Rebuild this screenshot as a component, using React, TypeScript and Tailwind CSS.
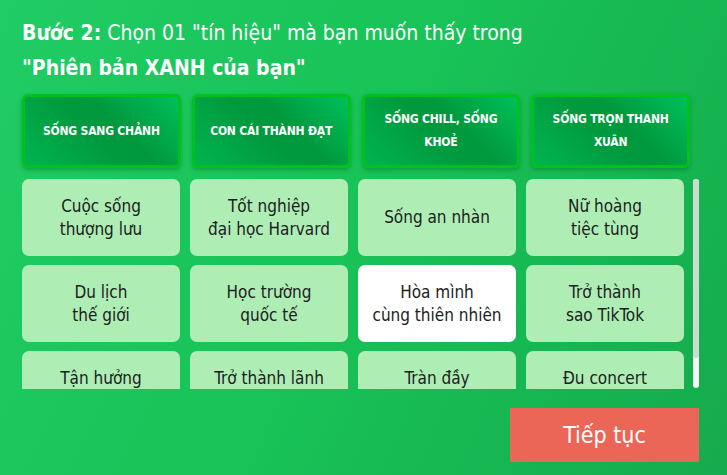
import React from 'react';

const categories = [
  ['SỐNG SANG CHẢNH'],
  ['CON CÁI THÀNH ĐẠT'],
  ['SỐNG CHILL, SỐNG', 'KHOẺ'],
  ['SỐNG TRỌN THANH', 'XUÂN'],
];

const signals = [
  ['Cuộc sống', 'thượng lưu'],
  ['Tốt nghiệp', 'đại học Harvard'],
  ['Sống an nhàn'],
  ['Nữ hoàng', 'tiệc tùng'],
  ['Du lịch', 'thế giới'],
  ['Học trường', 'quốc tế'],
  ['Hòa mình', 'cùng thiên nhiên'],
  ['Trở thành', 'sao TikTok'],
  ['Tận hưởng', 'nghỉ dưỡng'],
  ['Trở thành lãnh', 'đạo'],
  ['Tràn đầy', 'năng lượng'],
  ['Đu concert', 'thần tượng'],
];

const narrow = "font-['DejaVu_Sans_Condensed','Roboto',sans-serif]";

export default function App() {
  const selected = 6;

  return (
    <div
      className={`w-[727px] h-[475px] overflow-hidden bg-[linear-gradient(115deg,#20cc64_0%,#18c457_45%,#15ab4e_100%)] pl-[22px] pr-[28px] pt-[16px] ${narrow}`}
    >
      <h2 className="text-white text-[21px] leading-[35px] font-normal">
        <span className="font-bold">Bước 2:</span> Chọn 01 "tín hiệu" mà bạn muốn thấy trong
        <br />
        <span className="font-bold">"Phiên bản XANH của bạn"</span>
      </h2>

      <div className="grid grid-cols-4 gap-[11px] w-[668px] mt-[8px]">
        {categories.map((lines, i) => (
          <div
            key={i}
            className="h-[74px] rounded-[6px] border-[3px] border-[#00c21f] bg-[linear-gradient(45deg,#00b44f_0%,#009a3e_45%,#00983d_60%,#00c05a_100%)] shadow-[0_2px_4px_rgba(0,80,30,0.35)] flex flex-col items-center justify-center text-white text-[12px] leading-[23px] font-bold tracking-[-0.2px] whitespace-nowrap"
          >
            {lines.map((l) => (
              <span key={l}>{l}</span>
            ))}
          </div>
        ))}
      </div>

      <div className="mt-[11px] flex">
        <div className="h-[210px] w-[662px] overflow-hidden">
          <div className="grid grid-cols-4 gap-x-[10px] gap-y-[9px]">
            {signals.map((lines, i) => (
              <div
                key={i}
                className={`h-[77px] rounded-[7px] flex flex-col items-center justify-center text-[17px] leading-[23px] text-[#1c211d] text-center ${
                  i === selected ? 'bg-white' : 'bg-[#aeeeb5]'
                }`}
              >
                {lines.map((l) => (
                  <span key={l}>{l}</span>
                ))}
              </div>
            ))}
          </div>
        </div>
        {/* scrollbar */}
        <div className="ml-[9px] w-[6px] h-[209px] rounded-full bg-[#f4f7f5] overflow-hidden">
          <div className="h-[179px] rounded-full bg-[#cbdbd0]" />
        </div>
      </div>

      <div className="flex justify-end mt-[19px]">
        <button className="w-[189px] h-[54px] bg-[#eb6657] text-white text-[23px] font-normal flex items-center justify-center">
          Tiếp tục
        </button>
      </div>
    </div>
  );
}
